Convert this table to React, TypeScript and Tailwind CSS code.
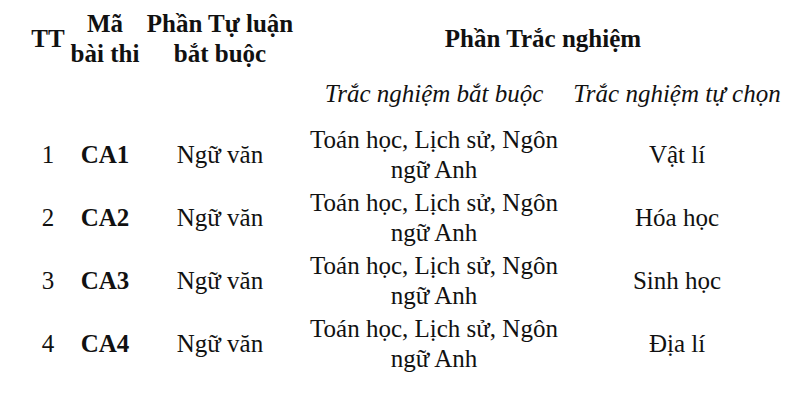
const rows = [
  { tt: "1", code: "CA1", optional: "Vật lí" },
  { tt: "2", code: "CA2", optional: "Hóa học" },
  { tt: "3", code: "CA3", optional: "Sinh học" },
  { tt: "4", code: "CA4", optional: "Địa lí" },
];

const gridCols = "grid grid-cols-[44px_70px_160px_268px_218px]";
const cell = "flex items-center justify-center text-center whitespace-nowrap";

export default function App() {
  return (
    <div className="w-[800px] h-[411px] overflow-hidden bg-white text-[#111] text-[25px] leading-[30px] font-['Liberation_Serif','Times_New_Roman',serif] pl-[26px] pt-[9px]">
      {/* header */}
      <div className={`${gridCols} h-[60px] font-bold`}>
        <div className={cell}>TT</div>
        <div className={cell}>
          Mã
          <br />
          bài thi
        </div>
        <div className={cell}>
          Phần Tự luận
          <br />
          bắt buộc
        </div>
        <div className={`${cell} col-span-2`}>Phần Trắc nghiệm</div>
      </div>

      <div className={`${gridCols} h-[30px] mt-[10px] italic`}>
        <div />
        <div />
        <div />
        <div className={cell}>Trắc nghiệm bắt buộc</div>
        <div className={cell}>Trắc nghiệm tự chọn</div>
      </div>

      <div className="flex flex-col gap-[3px] mt-[16px]">
        {rows.map((r) => (
          <div key={r.code} className={`${gridCols} h-[60px]`}>
            <div className={cell}>{r.tt}</div>
            <div className={`${cell} font-bold`}>{r.code}</div>
            <div className={cell}>Ngữ văn</div>
            <div className={cell}>
              Toán học, Lịch sử, Ngôn
              <br />
              ngữ Anh
            </div>
            <div className={cell}>{r.optional}</div>
          </div>
        ))}
      </div>
    </div>
  );
}
